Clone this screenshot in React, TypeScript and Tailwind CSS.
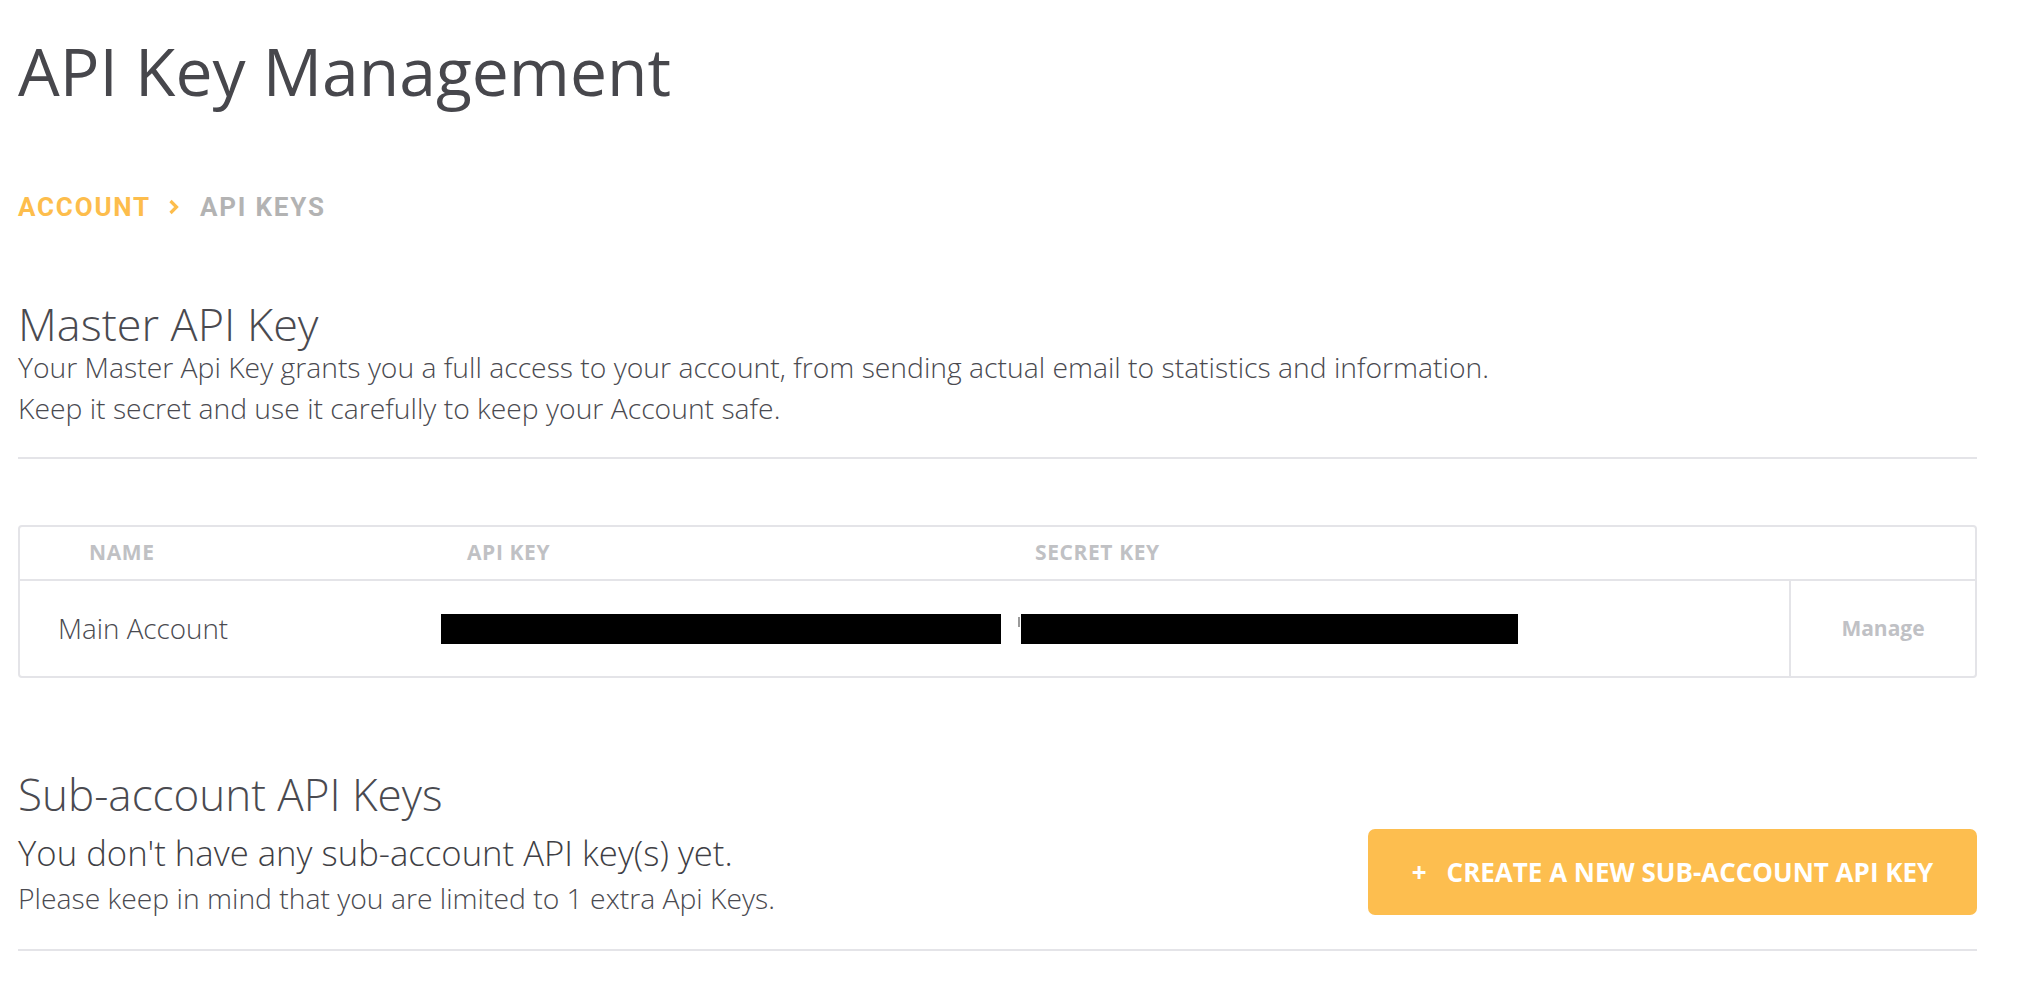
import React from "react";

const ApiKeys = () => {
  return (
    <div className="min-h-screen bg-white pl-[18px] pr-[45px] font-['Open_Sans',sans-serif] text-[#4a4a50]">
      <h1 className="pt-[37px] text-[66px] leading-none font-medium text-[#47474c]">
        API Key Management
      </h1>

      {/* Breadcrumb */}
      <div className="mt-[91px] flex items-center font-['Roboto',sans-serif] text-[26px] leading-none font-bold tracking-[1.8px]">
        <span className="text-[#fdbd4c]">ACCOUNT</span>
        <svg width="11" height="16" viewBox="0 0 11 16" className="ml-[17px] mr-[21px]">
          <path d="M2.5 2 L8.5 8 L2.5 14" fill="none" stroke="#fdbd4c" strokeWidth="3.2" />
        </svg>
        <span className="text-[#b3b3b3]">API KEYS</span>
      </div>

      {/* Master key */}
      <h2 className="mt-[81px] text-[45px] leading-none font-light">Master API Key</h2>
      <p className="mt-[1px] text-[28.3px] leading-[41px] font-light">
        Your Master Api Key grants you a full access to your account, from sending actual email to statistics and information.
        <br />
        Keep it secret and use it carefully to keep your Account safe.
      </p>
      <div className="mt-[28px] h-[2px] bg-[#e4e4e8]" />

      <div className="mt-[66px] rounded-[4px] border-2 border-[#e4e4e8]">
        <div className="grid h-[54px] grid-cols-[421px_580px_768px_1fr] items-center border-b-2 border-[#e4e4e8] text-[21px] font-bold tracking-[0.6px] text-[#c0c1c4]">
          <span className="pl-[69px]">NAME</span>
          <span className="pl-[26px]">API KEY</span>
          <span className="pl-[14px]">SECRET KEY</span>
          <span />
        </div>
        <div className="grid h-[95px] grid-cols-[421px_580px_768px_1fr] items-center">
          <span className="pl-[38px] text-[27.8px] font-light text-[#4a4a50]">Main Account</span>
          <div className="h-[30px] w-[560px] bg-black" />
          <div className="flex items-start">
            <span className="-ml-[3px] mr-[1px] mt-[3px] h-[10px] w-[2px] bg-[#9a9a9a]" />
            <div className="h-[30px] w-[497px] bg-black" />
          </div>
          <div className="flex h-full items-center justify-center border-l-2 border-[#e4e4e8] text-[21px] font-bold text-[#c0c1c5]">
            Manage
          </div>
        </div>
      </div>

      {/* Sub-account keys */}
      <h2 className="mt-[94px] text-[44px] leading-none font-light">Sub-account API Keys</h2>
      <div className="mt-[13px] flex items-end justify-between">
        <div>
          <p className="text-[34.7px] leading-none font-light text-[#3f3f45]">
            You don't have any sub-account API key(s) yet.
          </p>
          <p className="mt-[13px] text-[28.3px] leading-none font-light">
            Please keep in mind that you are limited to 1 extra Api Keys.
          </p>
        </div>
        <button className="-mb-[3px] flex h-[86px] w-[609px] items-center justify-center rounded-[7px] bg-[#fdbe4f] text-[26px] font-bold text-white">
          <span className="mr-[20px]">+</span>
          CREATE A NEW SUB-ACCOUNT API KEY
        </button>
      </div>
      <div className="mt-[37px] h-[2px] bg-[#e4e4e8]" />
    </div>
  );
};

export default function App() {
  return <ApiKeys />;
}
